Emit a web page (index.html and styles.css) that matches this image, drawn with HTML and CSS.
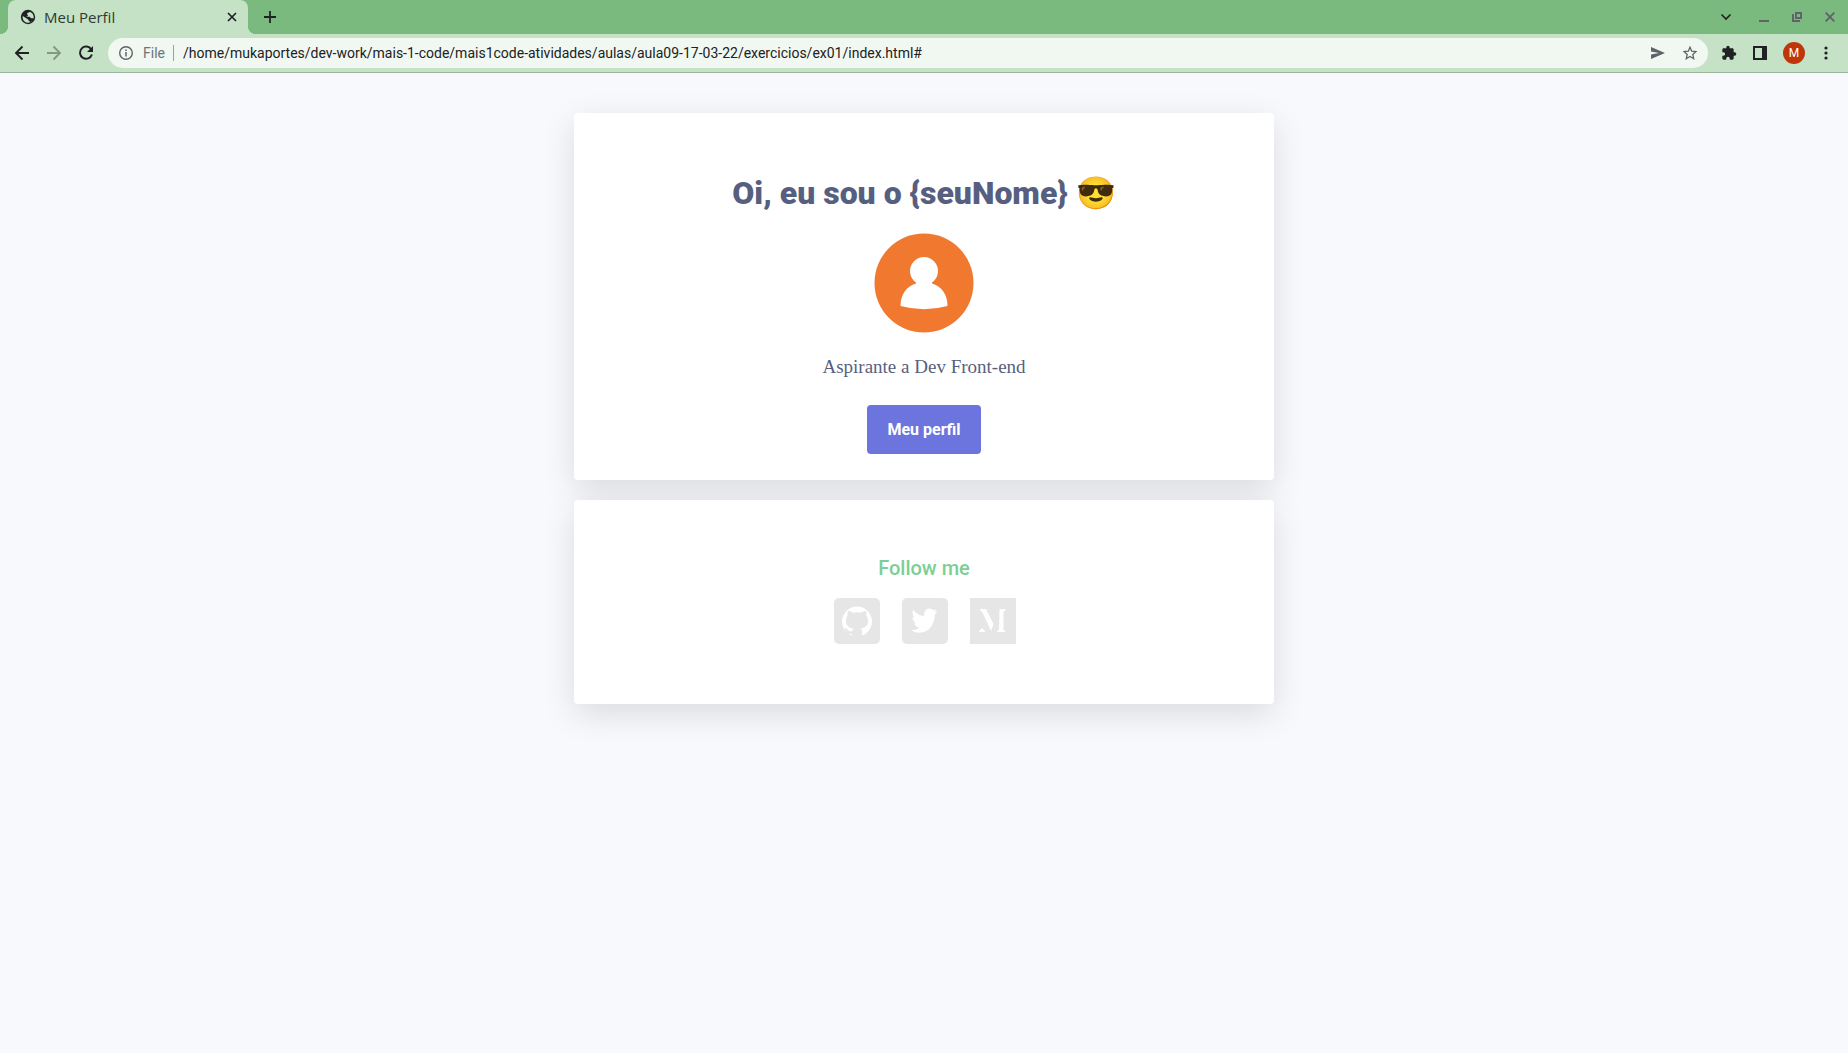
FILE: index.html
```html
<!DOCTYPE html>
<html lang="pt-BR">
<head>
<meta charset="utf-8">
<meta name="viewport" content="width=device-width, initial-scale=1">
<title>Meu Perfil</title>
<link rel="stylesheet" href="styles.css">
</head>
<body>
<header class="browser">
  <div class="tabstrip">
    <div class="tab">
      <svg class="tab-icon" viewBox="0 0 16 16" aria-hidden="true"><circle cx="8" cy="8" r="7.200" fill="#202124"/><path d="M9.500 2.800c-.4 1.200-2.300.8-2.500 2-.1.900 1 .8.900 1.600-.1.700-1.400.6-1.500 1.400h3.200c.8 0 .7 1.400 1.600 1.400h2.400c-.4 2-1.900 3.700-3.900 4.200V12c-.9 0-1.500-.7-1.500-1.500L2.700 6.900c-.6 3.200 1.500 6.300 4.700 6.800 4 .4 6.600-2.600 6.300-6.200-.3-2.200-1.800-4-4.200-4.700z" fill="#c5e2c6" fill-rule="evenodd"/></svg>
      <span class="tab-title">Meu Perfil</span>
      <button class="plain" aria-label="Fechar aba"><svg width="10" height="10" viewBox="0 0 10 10"><path d="M1 1l8 8M9 1l-8 8" stroke="#202124" stroke-width="1.700"/></svg></button>
    </div>
    <button class="plain new-tab" aria-label="Nova aba"><svg width="12" height="12" viewBox="0 0 12 12"><path d="M6 0v12M0 6h12" stroke="#202124" stroke-width="1.800"/></svg></button>
    <div class="window-controls">
      <button class="plain tab-search" aria-label="Buscar abas"><svg width="12" height="12" viewBox="0 0 12 12"><path d="M1.500 3.500L6 8l4.500-4.500" fill="none" stroke="#202124" stroke-width="1.700"/></svg></button>
      <button class="plain" aria-label="Minimizar"><svg width="10" height="10" viewBox="0 0 10 10"><path d="M0 9h10" stroke="#5f6368" stroke-width="2"/></svg></button>
      <button class="plain" aria-label="Restaurar"><svg width="10" height="10" viewBox="0 0 10 10"><path d="M4 1h5v5H4zM1 2v7h7" fill="none" stroke="#5f6368" stroke-width="1.900"/></svg></button>
      <button class="plain" aria-label="Fechar"><svg width="10" height="10" viewBox="0 0 10 10"><path d="M.7.7l8.600 8.600M9.300.7L.7 9.300" stroke="#5f6368" stroke-width="1.900"/></svg></button>
    </div>
  </div>
  <div class="toolbar">
    <nav class="history">
      <button class="plain" aria-label="Voltar"><svg width="16" height="16" viewBox="0 0 16 16"><path d="M15 8H2M8.500 1.500L2 8l6.500 6.500" fill="none" stroke="#202124" stroke-width="1.900"/></svg></button>
      <button class="plain" aria-label="Avançar"><svg width="16" height="16" viewBox="0 0 16 16"><path d="M1 8h13M7.500 1.500L14 8l-6.500 6.500" fill="none" stroke="#839884" stroke-width="1.900"/></svg></button>
      <button class="plain" aria-label="Recarregar"><svg width="16" height="16" viewBox="0 0 16 16"><path d="M13.300 4.500A6.100 6.100 0 1 0 13.900 9.500" fill="none" stroke="#202124" stroke-width="2"/><path d="M15 1v6H9z" fill="#202124"/></svg></button>
    </nav>
    <div class="omnibox">
      <svg width="14" height="14" viewBox="0 0 14 14" aria-hidden="true"><circle cx="7" cy="7" r="6.300" fill="none" stroke="#5f6368" stroke-width="1.400"/><path d="M7 6v4.500M7 3.400V5" stroke="#5f6368" stroke-width="1.500"/></svg>
      <label class="scheme" for="url">File</label>
      <input class="url" id="url" type="text" value="/home/mukaportes/dev-work/mais-1-code/mais1code-atividades/aulas/aula09-17-03-22/exercicios/ex01/index.html#">
      <button class="plain" aria-label="Compartilhar"><svg width="14" height="12" viewBox="0 0 14 12"><path d="M0 0l14 6L0 12V7.500L8 6 0 4.500z" fill="#5f6368"/></svg></button>
      <button class="plain" aria-label="Favoritos"><svg width="14" height="14" viewBox="0 0 14 14"><path d="M7 1.200l1.700 4 4.300.4-3.200 2.900.9 4.200L7 10.500l-3.700 2.200.9-4.200L1 5.600l4.300-.4z" fill="none" stroke="#5f6368" stroke-width="1.300"/></svg></button>
    </div>
    <div class="actions">
      <button class="plain" aria-label="Extensões"><svg width="16" height="16" viewBox="0 0 24 24"><path d="M20.500 11H19V7c0-1.100-.9-2-2-2h-4V3.500a2.500 2.500 0 0 0-5 0V5H4c-1.100 0-2 .9-2 2v3.800h1.500a2.700 2.700 0 0 1 0 5.400H2V20c0 1.100.9 2 2 2h3.800v-1.500a2.700 2.700 0 0 1 5.400 0V22H17c1.100 0 2-.9 2-2v-4h1.500a2.500 2.500 0 0 0 0-5z" fill="#202124"/></svg></button>
      <button class="plain" aria-label="Painel lateral"><svg width="14" height="14" viewBox="0 0 14 14"><path d="M0 0h14v14H0zM2 2v10h7V2z" fill="#202124" fill-rule="evenodd"/></svg></button>
      <button class="account">M</button>
      <button class="plain" aria-label="Menu"><svg width="4" height="14" viewBox="0 0 4 14"><g fill="#202124"><circle cx="2" cy="2" r="1.600"/><circle cx="2" cy="7" r="1.600"/><circle cx="2" cy="12" r="1.600"/></g></svg></button>
    </div>
  </div>
</header>
<main class="page">
  <section class="card intro">
    <h1 class="title">Oi, eu sou o {seuNome} 😎</h1>
    <svg class="avatar" viewBox="0 0 100 100" role="img" aria-label="Foto de perfil"><circle cx="50" cy="50" r="49.500" fill="#f0782f"/><path d="M42 49.500a14 14 0 1 1 16 0v1C67 53 73.500 61 73.500 73Q50 79.500 26.500 73C26.500 61 33 53 42 50.500z" fill="#fff"/></svg>
    <p class="role">Aspirante a Dev Front-end</p>
    <button class="profile-button">Meu perfil</button>
  </section>
  <section class="card follow">
    <h2 class="subtitle">Follow me</h2>
    <div class="socials">
      <a href="#" aria-label="GitHub"><svg class="social" viewBox="0 0 46 46"><rect width="46" height="46" rx="5" fill="#e6e6e6"/><circle cx="23" cy="23.500" r="15" fill="#fff"/><path d="M18 39.500v-3.800c-3.500.7-5-.3-6-2.500-.5-1.200-1-1.900-2.500-2.700 3.200-1 4.200 1.200 5.200 2.200 1 .9 2.300.7 3.500.2.200-1 .6-1.800 1.300-2.400-5-.6-7.500-3-7.500-7.800 0-2 .5-3.700 1.700-5-.5-1.700-.4-3.300.3-4.900 2 .1 3.500 1 5 2 2.700-.7 5.400-.7 8 0 1.500-1 3-1.900 5-2 .7 1.600.8 3.200.3 4.900 1.200 1.300 1.700 3 1.700 5 0 4.800-2.500 7.200-7.500 7.800 1 .9 1.500 2.200 1.500 4v5z" fill="#e6e6e6"/></svg></a>
      <a href="#" aria-label="Twitter"><svg class="social" viewBox="0 0 448 448"><rect width="448" height="448" rx="48" fill="#e6e6e6"/><path transform="translate(41 -10) scale(.79 .9)" d="M351.100 190.800c.2 2.800.2 5.700.2 8.500 0 86.700-66 186.600-186.600 186.600-37.200 0-71.700-10.800-100.700-29.400 5.300.6 10.400.8 15.800.8 30.700 0 58.900-10.400 81.400-28-28.800-.6-53-19.500-61.300-45.500 10.100 1.500 19.200 1.500 29.600-1.200-30-6.100-52.500-32.500-52.500-64.400v-.8c8.700 4.900 18.900 7.900 29.600 8.300a65.400 65.400 0 0 1-29.200-54.600c0-12.200 3.200-23.400 8.900-33.100 32.300 39.800 80.800 65.800 135.200 68.600-9.300-44.500 24-80.600 64-80.600 18.900 0 35.900 7.900 47.900 20.700 14.800-2.800 29-8.300 41.600-15.800-4.900 15.200-15.200 28-28.800 36.100 13.200-1.400 26-5.100 37.800-10.200-8.900 13.100-20.100 24.700-32.900 34z" fill="#fff"/></svg></a>
      <a href="#" aria-label="Medium"><svg class="social" viewBox="0 0 46 46"><path d="M0 0h46v46H0z" fill="#e6e6e6"/><path d="M10 11h6l7.500 15-2.500 7L12.500 14.500 10 12.300zM29.500 11h6v1.300l-2 1.700v18l2 1.300V34h-8.500v-.8l2-1.300zM12 30l3 3v1H9v-1z" fill="#fff"/></svg></a>
    </div>
  </section>
</main>
</body>
</html>
```

FILE: styles.css
```css
* { box-sizing: border-box; }

body {
  margin: 0;
  min-height: 100vh;
  background: #f8f9fd;
  color: #575f80;
  font-family: Roboto, sans-serif;
}

button { font-family: inherit; cursor: pointer; }

.plain {
  display: flex;
  padding: 0;
  border: 0;
  background: none;
}

.browser {
  background: #c5e2c6;
  border-bottom: 1px solid #9ab59b;
}

.tabstrip {
  display: flex;
  align-items: center;
  height: 34px;
  padding: 0 13px 0 8px;
  background: #7bba7f;
}

.tab {
  display: flex;
  align-items: center;
  position: relative;
  width: 240px;
  height: 34px;
  padding: 0 11px 0 12px;
  border-radius: 8px 8px 0 0;
  background: #c5e2c6;
}

.tab::before,
.tab::after {
  content: "";
  position: absolute;
  bottom: 0;
  width: 8px;
  height: 8px;
}

.tab::before {
  left: -8px;
  background: radial-gradient(circle at 0 0, #7bba7f 8px, #c5e2c6 8px);
}

.tab::after {
  right: -8px;
  background: radial-gradient(circle at 100% 0, #7bba7f 8px, #c5e2c6 8px);
}

.tab-icon { width: 16px; height: 16px; }

.tab-title {
  flex: 1;
  margin-left: 8px;
  color: #2f3a30;
  font-family: "Open Sans", sans-serif;
  font-size: 15px;
  line-height: 18px;
}

.new-tab { margin-left: 16px; }

.window-controls {
  display: flex;
  align-items: center;
  gap: 23px;
  margin-left: auto;
}

.tab-search { margin-right: 4px; }

.toolbar {
  display: flex;
  align-items: center;
  height: 38px;
  padding: 0 20px 0 14px;
}

.history { display: flex; gap: 16px; }

.omnibox {
  display: flex;
  flex: 1;
  align-items: center;
  height: 30px;
  margin-left: 14px;
  padding: 0 11px;
  border-radius: 15px;
  background: #f1f8f1;
  font-size: 14px;
}

.scheme {
  margin-left: 10px;
  padding-right: 8px;
  border-right: 1px solid #9aa09b;
  color: #6b7479;
  line-height: 16px;
}

.url {
  flex: 1;
  min-width: 0;
  margin-left: 9px;
  padding: 0;
  border: 0;
  outline: 0;
  background: none;
  color: #202124;
  font: inherit;
}

.omnibox .plain { margin-left: 18px; }

.actions {
  display: flex;
  align-items: center;
  gap: 16px;
  margin-left: 13px;
}

.account {
  width: 22px;
  height: 22px;
  margin-right: 3px;
  padding: 0;
  border: 0;
  border-radius: 50%;
  background: #bf360c;
  color: #fff;
  font-size: 12px;
}

.page {
  display: grid;
  gap: 20px;
  max-width: 700px;
  margin: 40px auto;
}

.card {
  display: flex;
  flex-direction: column;
  align-items: center;
  border-radius: 4px;
  background: #fff;
  box-shadow: 0 10px 34px rgba(0, 0, 0, 0.12);
}

.intro { padding: 60px 24px 26px; }

.title {
  margin: 0;
  font-size: 32px;
  font-weight: 900;
  line-height: 40px;
}

.avatar {
  width: 100px;
  height: 100px;
  margin-top: 20px;
}

.role {
  margin: 20px 0 24px;
  font-family: "Liberation Serif", serif;
  font-size: 19px;
  line-height: 28px;
}

.profile-button {
  padding: 15px 20px;
  border: 0;
  border-radius: 4px;
  background: #6c75dd;
  color: #fff;
  font-size: 16px;
  font-weight: 700;
  line-height: 19px;
}

.follow { padding: 56px 24px 60px; }

.subtitle {
  margin: 0;
  color: #7bcf94;
  font-size: 20px;
  font-weight: 500;
  line-height: 24px;
}

.socials {
  display: flex;
  gap: 22px;
  margin-top: 18px;
  padding-left: 2px;
}

.social {
  display: block;
  width: 46px;
  height: 46px;
}
```
